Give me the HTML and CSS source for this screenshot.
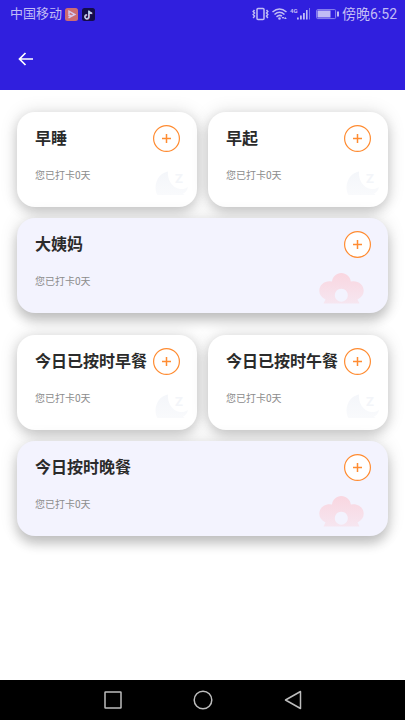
FILE: index.html
```html
<!DOCTYPE html>
<html lang="zh-CN">
<head>
<meta charset="utf-8">
<meta name="viewport" content="width=device-width, initial-scale=1">
<title>打卡</title>
<link rel="stylesheet" href="styles.css">
</head>
<body>
<svg class="defs" aria-hidden="true">
  <defs>
    <linearGradient id="moon-fill" x1="0" y1="0" x2="0" y2="1">
      <stop offset="0" stop-color="#f4f6fa"/><stop offset="1" stop-color="#f9fafc"/>
    </linearGradient>
    <linearGradient id="flower-fill" x1="0" y1="0" x2="0" y2="1">
      <stop offset="0" stop-color="#f9d6e0"/><stop offset="1" stop-color="#f6e6f0"/>
    </linearGradient>
    <symbol id="moon" viewBox="0 0 34 24">
      <path fill="url(#moon-fill)" d="M13 0.500C12 8 17 17 25 18C28 18.400 31 17.500 33 16C32 20 30 22 28 22.500L29.500 24H2.500C0 20 0 14 2 9.500C4 4.500 8 1.500 13 .5Z"/>
      <text class="moon-letter" x="20" y="12">Z</text>
    </symbol>
    <symbol id="flower" viewBox="0 0 45 32">
      <path fill="url(#flower-fill)" fill-rule="evenodd" d="M4.500 31.500L6.500 27.500C2.500 25.500 .3 22.500 .3 18.800C.3 13 5 9.200 10.500 9.200L13 9.600C13.500 4.500 17.500 1 22.300 1S31.300 4.500 31.800 9.600L34.500 9.200C40 9.200 44.700 13 44.700 18.800C44.700 22.500 42.500 25.500 38.500 27.500L40.500 31.500ZM22.300 16.700a6.500 6.500 0 1 0 .01 0Z"/>
    </symbol>
    <symbol id="plus" viewBox="0 0 27 27">
      <circle cx="13.500" cy="13.500" r="12.900" fill="#fff" stroke="#ff8c32" stroke-width="1.200"/>
      <path d="M9 13.500h9M13.500 9v9" fill="none" stroke="#ff8c32" stroke-width="1.500"/>
    </symbol>
  </defs>
</svg>

<header class="top">
  <div class="status">
    <span class="carrier">中国移动</span>
    <svg class="app-icon" viewBox="0 0 13 13" aria-hidden="true">
      <rect width="13" height="13" rx="2.500" fill="#cc6c72"/>
      <path d="M4 6.500V3.200L9.800 6.500L3.500 9.900M3.200 7.600H6.500" fill="none" stroke="#d4c8ee" stroke-width="1.500"/>
    </svg>
    <svg class="app-icon" viewBox="0 0 13 13" aria-hidden="true">
      <rect width="13" height="13" rx="2.500" fill="#130d4a"/>
      <path d="M6.800 2.500V8.500A2 2 0 1 1 4.800 6.700M6.800 2.800Q7.500 5 10 5.200" transform="translate(.5 .4)" fill="none" stroke="#c45a86" stroke-width="1.500"/>
      <path d="M6.800 2.500V8.500A2 2 0 1 1 4.800 6.700M6.800 2.800Q7.500 5 10 5.200" fill="none" stroke="#b9d4f2" stroke-width="1.400"/>
    </svg>
    <span class="spacer"></span>
    <svg class="signals" viewBox="0 0 88 14" aria-hidden="true">
      <g fill="none" stroke="#c1bcf5" stroke-width="1.500">
        <rect x="5" y="1.500" width="7" height="11" rx="1"/>
        <path d="M2.500 3l-1.300 1.500 1.300 1.500-1.300 1.500 1.300 1.500-1.300 2M14.500 3l1.300 1.500-1.300 1.500 1.300 1.500-1.300 1.500 1.300 2"/>
        <path d="M20.500 5Q27.500-1 34.500 5M22.500 7.500Q27.500 3 32.500 7.500M24.500 9.800Q27.500 7.300 30 9.200"/>
        <rect x="64.600" y="2.600" width="19" height="9" rx="1" stroke="#8e86ee" stroke-width="1"/>
      </g>
      <g fill="#c1bcf5">
        <circle cx="27.500" cy="11.500" r="1.300"/>
        <path d="M29.500 10l1.500 2 1.500-2zM32 12l1.300-2 1.500 2z"/>
        <text class="network" x="38" y="6">4G</text>
        <path d="M45 10.500h1.800v2H45zM48 8.500h1.800v4H48zM51 6h1.800v6.500H51zM54 3h1.600v9.500H54z"/>
        <path d="M57 1h1v11.500h-1z" fill="#7c73eb"/>
        <rect x="65.500" y="3.500" width="13" height="7"/>
        <rect x="85" y="4.500" width="2" height="5"/>
      </g>
    </svg>
    <span class="time">傍晚6:52</span>
  </div>
  <nav class="bar">
    <button class="back" type="button" aria-label="返回">
      <svg viewBox="0 0 16 14" aria-hidden="true"><path d="M7.500 1L1.500 7L7.500 13M1.500 7H15" fill="none" stroke="#fff" stroke-width="1.700"/></svg>
    </button>
  </nav>
</header>

<main class="content">
  <section class="group">
    <article class="card">
      <div class="head"><h2>早睡</h2><button class="add" type="button" aria-label="早睡打卡"><svg><use href="#plus"/></svg></button></div>
      <p>您已打卡0天</p>
      <svg class="moon" aria-hidden="true"><use href="#moon"/></svg>
    </article>
    <article class="card">
      <div class="head"><h2>早起</h2><button class="add" type="button" aria-label="早起打卡"><svg><use href="#plus"/></svg></button></div>
      <p>您已打卡0天</p>
      <svg class="moon" aria-hidden="true"><use href="#moon"/></svg>
    </article>
    <article class="card wide">
      <div class="head"><h2>大姨妈</h2><button class="add" type="button" aria-label="大姨妈打卡"><svg><use href="#plus"/></svg></button></div>
      <p>您已打卡0天</p>
      <svg class="flower" aria-hidden="true"><use href="#flower"/></svg>
    </article>
  </section>
  <section class="group">
    <article class="card">
      <div class="head"><h2>今日已按时早餐</h2><button class="add" type="button" aria-label="早餐打卡"><svg><use href="#plus"/></svg></button></div>
      <p>您已打卡0天</p>
      <svg class="moon" aria-hidden="true"><use href="#moon"/></svg>
    </article>
    <article class="card">
      <div class="head"><h2>今日已按时午餐</h2><button class="add" type="button" aria-label="午餐打卡"><svg><use href="#plus"/></svg></button></div>
      <p>您已打卡0天</p>
      <svg class="moon" aria-hidden="true"><use href="#moon"/></svg>
    </article>
    <article class="card wide">
      <div class="head"><h2>今日按时晚餐</h2><button class="add" type="button" aria-label="晚餐打卡"><svg><use href="#plus"/></svg></button></div>
      <p>您已打卡0天</p>
      <svg class="flower" aria-hidden="true"><use href="#flower"/></svg>
    </article>
  </section>
</main>

<footer class="system">
  <button type="button" aria-label="最近任务"><svg viewBox="0 0 20 20"><rect x="2" y="2" width="16" height="16" rx=".5"/></svg></button>
  <button type="button" aria-label="主屏幕"><svg viewBox="0 0 20 20"><circle cx="10" cy="10" r="8.800"/></svg></button>
  <button type="button" aria-label="后退"><svg viewBox="0 0 20 20"><path d="M17.500 1.500V18.500L2.500 10Z" stroke-linejoin="round"/></svg></button>
</footer>
</body>
</html>
```
FILE: styles.css
```css
* {
  box-sizing: border-box;
}

body {
  margin: 0;
  min-height: 100vh;
  display: flex;
  flex-direction: column;
  background: #fff;
  font-family: Roboto, "Noto Sans CJK SC", sans-serif;
}

button {
  display: flex;
  padding: 0;
  border: 0;
  background: none;
}

svg {
  display: block;
  flex: none;
}

.defs {
  position: absolute;
  width: 0;
  height: 0;
}

.top {
  height: 90px;
  background: #301fde;
}

.status {
  display: flex;
  align-items: center;
  height: 28px;
  padding: 0 8px 0 10px;
  color: #c1bcf5;
  line-height: 20px;
}

.carrier {
  margin-right: 3px;
  font-size: 13px;
}

.app-icon {
  width: 13px;
  height: 13px;
  margin-right: 4px;
}

.spacer {
  flex: 1;
}

.signals {
  width: 88px;
  height: 14px;
  margin-right: 2px;
}

.network {
  font: bold 6px Roboto, sans-serif;
}

.time {
  font-size: 14px;
}

.bar {
  display: flex;
  align-items: center;
  height: 62px;
  padding: 0 18px;
}

.back svg {
  width: 16px;
  height: 14px;
}

.content {
  flex: 1;
  display: flex;
  flex-direction: column;
  gap: 22px;
  padding: 22px 17px;
}

.group {
  display: grid;
  grid-template-columns: 1fr 1fr;
  gap: 11px;
}

.card {
  position: relative;
  height: 95px;
  padding: 13px 17px 0 18px;
  border-radius: 18px;
  background: #fff;
  box-shadow: 0 5px 12px rgba(0, 0, 0, 0.16), 0 0 18px rgba(0, 0, 0, 0.13);
}

.wide {
  grid-column: 1 / -1;
  background: #f3f3fe;
  box-shadow: 0 8px 12px rgba(0, 0, 0, 0.2), 0 0 18px rgba(0, 0, 0, 0.13);
}

.head {
  display: flex;
  align-items: center;
  justify-content: space-between;
  height: 27px;
}

h2 {
  margin: 0;
  color: #2b2b2b;
  font-size: 16px;
  font-weight: 700;
  line-height: 24px;
  white-space: nowrap;
}

.add svg {
  width: 27px;
  height: 27px;
}

.card p {
  margin: 16px 0 0;
  color: #8c8c8c;
  font-size: 10px;
  line-height: 16px;
}

.moon {
  position: absolute;
  right: 8px;
  bottom: 12px;
  width: 34px;
  height: 24px;
}

.moon-letter {
  fill: #f3f5f9;
  font: bold 13px Roboto, sans-serif;
}

.flower {
  position: absolute;
  right: 24px;
  bottom: 9px;
  width: 45px;
  height: 32px;
}

.system {
  display: flex;
  justify-content: center;
  align-items: center;
  gap: 70px;
  height: 40px;
  background: #000;
}

.system svg {
  width: 20px;
  height: 20px;
  fill: none;
  stroke: #bdbdbd;
  stroke-width: 1.5;
}
```
